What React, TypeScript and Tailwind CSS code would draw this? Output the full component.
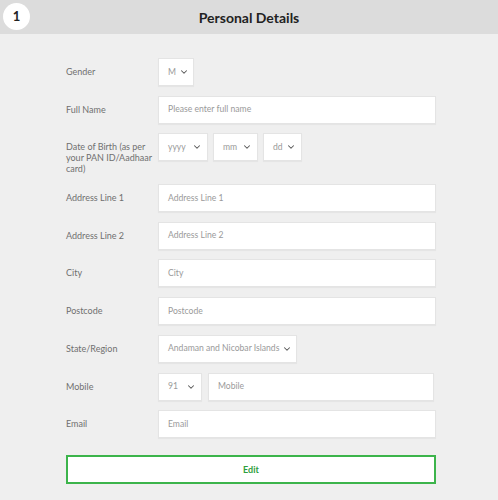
import { ChevronDown } from "lucide-react";

const font = { fontFamily: 'Lato, "Noto Sans", sans-serif' };

const labelClass = "w-[92px] shrink-0 pt-[8px] pr-[6px] text-[9px] leading-[11px] text-[#707070]";
const boxClass =
  "h-[28px] bg-white border border-[#e4e4e4] shadow-[0_1px_1px_rgba(0,0,0,0.04)] text-[8.6px] text-[#9a9a9a] flex items-center whitespace-nowrap";

function Select({ value, width }: { value: string; width: string }) {
  return (
    <div className={`${boxClass} ${width} justify-between pl-[9px] pr-[5px]`}>
      <span>{value}</span>
      <ChevronDown className="w-[10px] h-[10px] shrink-0 ml-[3px] text-[#555]" strokeWidth={2.5} />
    </div>
  );
}

function Input({ placeholder, width = "flex-1" }: { placeholder: string; width?: string }) {
  return (
    <div className={`${boxClass} ${width} pl-[9px]`}>
      <span>{placeholder}</span>
    </div>
  );
}

function Row({ label, children }: { label: string; children: React.ReactNode }) {
  return (
    <div className="flex items-start">
      <div className={labelClass}>{label}</div>
      <div className="flex-1 flex gap-[5px]">{children}</div>
    </div>
  );
}

export default function App() {
  return (
    <div className="w-[498px] h-[500px] bg-[#efefef]" style={font}>
      <div className="h-[34px] bg-[#dcdcdc] flex items-center relative">
        <div className="absolute left-[3px] top-[3px] w-[27px] h-[27px] rounded-full bg-white flex items-center justify-center text-[13px] font-bold text-[#222]">
          1
        </div>
        <div className="flex-1 text-center text-[14px] font-bold text-[#222]">Personal Details</div>
      </div>

      <div className="pl-[66px] pr-[62px] pt-[24px] flex flex-col gap-[9.7px]">
        <Row label="Gender">
          <Select value="M" width="w-[36px]" />
        </Row>
        <Row label="Full Name">
          <Input placeholder="Please enter full name" />
        </Row>
        <Row label="Date of Birth (as per your PAN ID/Aadhaar card)">
          <Select value="yyyy" width="w-[50px]" />
          <Select value="mm" width="w-[45px]" />
          <Select value="dd" width="w-[39px]" />
        </Row>
        <Row label="Address Line 1">
          <Input placeholder="Address Line 1" />
        </Row>
        <Row label="Address Line 2">
          <Input placeholder="Address Line 2" />
        </Row>
        <Row label="City">
          <Input placeholder="City" />
        </Row>
        <Row label="Postcode">
          <Input placeholder="Postcode" />
        </Row>
        <Row label="State/Region">
          <Select value="Andaman and Nicobar Islands" width="w-[139px]" />
        </Row>
        <Row label="Mobile">
          <Select value="91" width="w-[44px]" />
          <Input placeholder="Mobile" width="w-[226px] ml-[1px]" />
        </Row>
        <Row label="Email">
          <Input placeholder="Email" />
        </Row>

        <button className="mt-[7px] h-[29px] w-full bg-white border-2 border-[#3cb44b] text-[9px] font-bold text-[#2e9e3c]">
          Edit
        </button>
      </div>
    </div>
  );
}
